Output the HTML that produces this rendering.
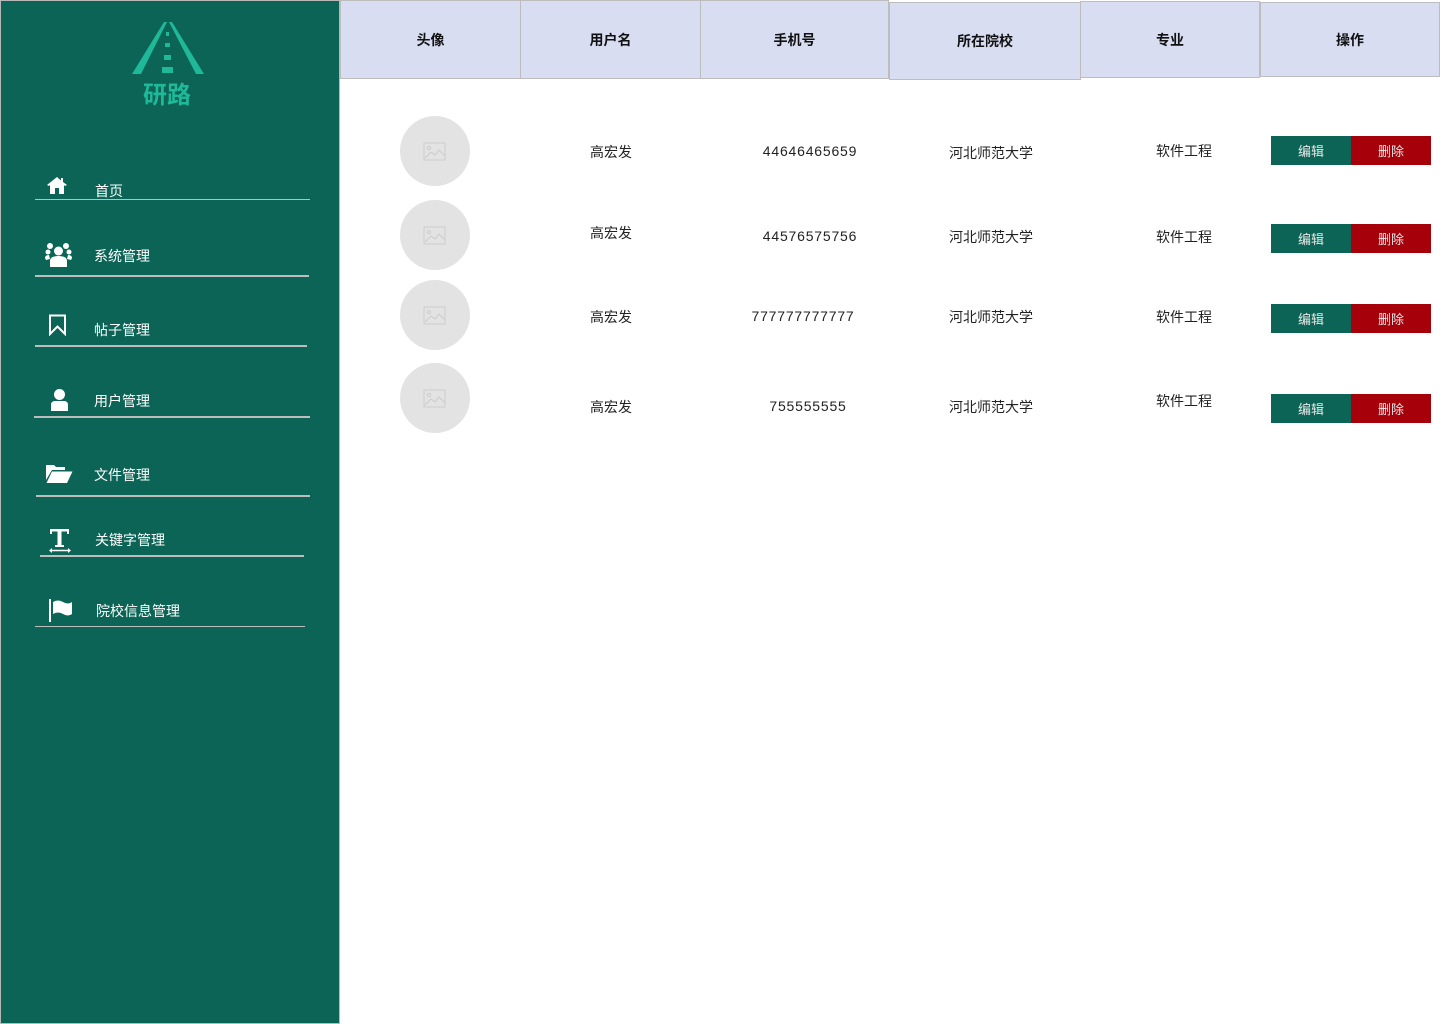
<!DOCTYPE html>
<html><head><meta charset="utf-8"><style>
body{margin:0;width:1440px;height:1024px;position:relative;background:#fff;font-family:"Liberation Sans","Noto Sans CJK SC",sans-serif;overflow:hidden}
.a{position:absolute}
#side{left:0;top:0;width:338px;height:1022px;background:#0b6455;border:1px solid #b8b8b8}
.nav{color:#fff;font-size:14px;white-space:nowrap}
.ln{height:2px;background:#bdbdbd}
.h{background:#d9ddf2;border:1px solid #bdbdbd;box-sizing:border-box;display:flex;align-items:center;justify-content:center;font-size:14px;font-weight:bold;color:#111}
.av{width:70px;height:70px;border-radius:50%;background:#e3e3e3;left:400px}
.t{font-size:14px;color:#222;white-space:nowrap;transform:translateX(-50%)}
.n{letter-spacing:0.8px}
.b{width:80px;height:29px;color:#e8e8e8;font-size:13px;display:flex;align-items:center;justify-content:center}
</style></head><body>
<div id="side" class="a"></div>
<svg class="a" style="left:128px;top:18px" width="80" height="62" viewBox="128 18 80 62">
<polygon points="164,22 167,22 141,74 132,74" fill="#1fb99a"/>
<polygon points="169,22 172,22 204,74 196,74" fill="#1fb99a"/>
<rect x="166" y="32" width="3" height="4" fill="#1fb99a"/>
<rect x="165" y="43" width="5" height="4" fill="#1fb99a"/>
<rect x="164" y="55" width="7" height="5" fill="#1fb99a"/>
<rect x="162" y="67" width="11" height="6" fill="#1fb99a"/>
</svg>
<div class="a" style="left:143px;top:75px;font-size:24px;color:#1fb99a;font-weight:bold">研路</div>

<svg class="a" style="left:46px;top:176px" width="22" height="18" viewBox="0 0 22 18"><path d="M11 1 L1 9 L3 10 L4 9 V18 H9 V12 H13 V18 H18 V9 L19 10 L21 9 L17 6 V2 H15 V4.5 Z" fill="#fff"/></svg>
<div class="a nav" style="left:95px;top:181px">首页</div>
<div class="a ln" style="left:35px;top:199px;width:275px;height:1px"></div>

<svg class="a" style="left:45px;top:242px" width="27" height="25" viewBox="0 0 27 25"><circle cx="5" cy="4" r="3" fill="#fff"/><circle cx="21" cy="4" r="3" fill="#fff"/><circle cx="13.5" cy="9" r="4.5" fill="#fff"/><circle cx="3" cy="10" r="2.5" fill="#fff"/><circle cx="24" cy="10" r="2.5" fill="#fff"/><path d="M5 25 V19 Q5 14 13.5 14 Q22 14 22 19 V25 Z" fill="#fff"/><path d="M0 16 Q0 13 4 13 L5 17 L1 18Z M27 16 Q27 13 23 13 L22 17 L26 18Z" fill="#fff"/></svg>
<div class="a nav" style="left:94px;top:246px">系统管理</div>
<div class="a ln" style="left:35px;top:275px;width:274px"></div>

<svg class="a" style="left:48px;top:314px" width="19" height="22" viewBox="0 0 19 22"><path d="M2 1.5 H17 V20 L9.5 12.5 L2 20 Z" fill="none" stroke="#fff" stroke-width="2"/></svg>
<div class="a nav" style="left:94px;top:320px">帖子管理</div>
<div class="a ln" style="left:35px;top:345px;width:272px"></div>

<svg class="a" style="left:50px;top:389px" width="19" height="22" viewBox="0 0 19 22"><circle cx="9.5" cy="5.5" r="5.5" fill="#fff"/><path d="M1 22 V16 Q1 12 5 12 H14 Q18 12 18 16 V22 Z" fill="#fff"/></svg>
<div class="a nav" style="left:94px;top:391px">用户管理</div>
<div class="a ln" style="left:34px;top:416px;width:276px"></div>

<svg class="a" style="left:46px;top:464px" width="27" height="20" viewBox="0 0 27 20"><path d="M0 1 H8 L10 3 H19 V6 H6 L0 16 Z" fill="#fff"/><path d="M6 7.5 H26.5 L21 19 H0.5 Z" fill="#fff"/></svg>
<div class="a nav" style="left:94px;top:465px">文件管理</div>
<div class="a ln" style="left:36px;top:495px;width:274px"></div>

<svg class="a" style="left:48px;top:528px" width="24" height="25" viewBox="0 0 24 25"><path d="M2 1 H21 V6 H19 V3.5 H13.5 V17 H16 V19 H7 V17 H9.5 V3.5 H4 V6 H2 Z" fill="#fff"/><path d="M3 22.5 H21" stroke="#fff" stroke-width="1.5"/><path d="M1 22.5 L4 20 V25 Z M23 22.5 L20 20 V25Z" fill="#fff"/></svg>
<div class="a nav" style="left:95px;top:530px">关键字管理</div>
<div class="a ln" style="left:40px;top:555px;width:264px"></div>

<svg class="a" style="left:48px;top:599px" width="26" height="23" viewBox="0 0 26 23"><rect x="1" y="0" width="2" height="23" fill="#fff"/><path d="M5 3 Q10 0 15 3 Q20 6 24 3 V15 Q20 18 15 15 Q10 12 5 15 Z" fill="#fff"/></svg>
<div class="a nav" style="left:96px;top:601px">院校信息管理</div>
<div class="a ln" style="left:35px;top:626px;width:270px;height:1px"></div>

<div class="a h" style="left:340px;top:0;width:181px;height:79px">头像</div>
<div class="a h" style="left:520px;top:0;width:181px;height:79px">用户名</div>
<div class="a h" style="left:700px;top:0;width:189px;height:79px">手机号</div>
<div class="a h" style="left:889px;top:2px;width:192px;height:78px">所在院校</div>
<div class="a h" style="left:1080px;top:1px;width:180px;height:77px">专业</div>
<div class="a h" style="left:1260px;top:2px;width:180px;height:75px">操作</div>

<svg width="0" height="0" style="position:absolute"><defs><g id="pic"><rect x="-11" y="-8" width="21" height="17" fill="none" stroke="#ccc" stroke-width="1"/><circle cx="-6" cy="-3" r="1.6" fill="none" stroke="#ccc"/><path d="M-10 7 L-4 1 L0 4 L4 -1 L10 5" fill="none" stroke="#ccc"/></g></defs></svg>
<div class="a av" style="top:116px"><svg width="70" height="70"><use href="#pic" x="35" y="35"/></svg></div>
<div class="a av" style="top:200px"><svg width="70" height="70"><use href="#pic" x="35" y="35"/></svg></div>
<div class="a av" style="top:280px"><svg width="70" height="70"><use href="#pic" x="35" y="35"/></svg></div>
<div class="a av" style="top:363px"><svg width="70" height="70"><use href="#pic" x="35" y="35"/></svg></div>

<div class="a t" style="left:611px;top:142px">高宏发</div>
<div class="a t n" style="left:810px;top:143px">44646465659</div>
<div class="a t" style="left:991px;top:143px">河北师范大学</div>
<div class="a t" style="left:1184px;top:141px">软件工程</div>

<div class="a t" style="left:611px;top:223px">高宏发</div>
<div class="a t n" style="left:810px;top:228px">44576575756</div>
<div class="a t" style="left:991px;top:227px">河北师范大学</div>
<div class="a t" style="left:1184px;top:227px">软件工程</div>

<div class="a t" style="left:611px;top:307px">高宏发</div>
<div class="a t n" style="left:803px;top:308px">777777777777</div>
<div class="a t" style="left:991px;top:307px">河北师范大学</div>
<div class="a t" style="left:1184px;top:307px">软件工程</div>

<div class="a t" style="left:611px;top:397px">高宏发</div>
<div class="a t n" style="left:808px;top:398px">755555555</div>
<div class="a t" style="left:991px;top:397px">河北师范大学</div>
<div class="a t" style="left:1184px;top:391px">软件工程</div>

<div class="a b" style="left:1271px;top:136px;background:#0b6455">编辑</div><div class="a b" style="left:1351px;top:136px;background:#a6000a">删除</div>
<div class="a b" style="left:1271px;top:224px;background:#0b6455">编辑</div><div class="a b" style="left:1351px;top:224px;background:#a6000a">删除</div>
<div class="a b" style="left:1271px;top:304px;background:#0b6455">编辑</div><div class="a b" style="left:1351px;top:304px;background:#a6000a">删除</div>
<div class="a b" style="left:1271px;top:394px;background:#0b6455">编辑</div><div class="a b" style="left:1351px;top:394px;background:#a6000a">删除</div>
</body></html>
